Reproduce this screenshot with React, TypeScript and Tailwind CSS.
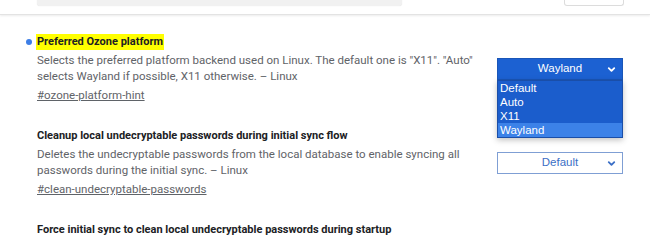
import { ChevronDown } from "lucide-react";

type Flag = {
  title: string;
  desc: string;
  link?: string;
  highlight?: boolean;
  value?: string;
  open?: boolean;
};

const FLAGS: Flag[] = [
  {
    title: "Preferred Ozone platform",
    desc: "Selects the preferred platform backend used on Linux. The default one is \"X11\". \"Auto\" selects Wayland if possible, X11 otherwise. – Linux",
    link: "#ozone-platform-hint",
    highlight: true,
    value: "Wayland",
    open: true,
  },
  {
    title: "Cleanup local undecryptable passwords during initial sync flow",
    desc: "Deletes the undecryptable passwords from the local database to enable syncing all passwords during the initial sync. – Linux",
    link: "#clean-undecryptable-passwords",
    value: "Default",
  },
  {
    title: "Force initial sync to clean local undecryptable passwords during startup",
    desc: "",
  },
];

const OPTIONS = ["Default", "Auto", "X11", "Wayland"];

const Select = ({ value, open }: { value: string; open?: boolean }) => (
  <div className="relative w-[126px] shrink-0 font-['Liberation_Sans',Arial,sans-serif]">
    {open ? (
      <div className="h-[22px] bg-[#1c61d2] border border-[#1a56b8] text-white text-[11.5px] flex items-center justify-center relative">
        {value}
        <ChevronDown className="absolute right-[5px] top-[5px] w-[11px] h-[11px]" strokeWidth={4} />
      </div>
    ) : (
      <div className="h-[22px] bg-white border border-[#7f9fd4] text-[#3b6fc6] text-[11.5px] flex items-center justify-center relative">
        {value}
        <ChevronDown className="absolute right-[5px] top-[5px] w-[11px] h-[11px]" strokeWidth={4} />
      </div>
    )}
    {open && (
      <ul className="absolute left-0 top-[22px] w-full bg-[#1b5dcc] border border-[#1a4ea8] shadow-[0_2px_6px_rgba(0,0,0,0.25)] z-10">
        {OPTIONS.map((o) => (
          <li
            key={o}
            className={`h-[14px] leading-[14px] pl-[2px] text-[11.5px] text-white ${o === value ? "bg-[#3c82e8]" : ""}`}
          >
            {o}
          </li>
        ))}
      </ul>
    )}
  </div>
);

export default function App() {
  return (
    <div className="w-[650px] h-[237px] overflow-hidden bg-white font-['Roboto','Liberation_Sans',sans-serif]">
      <header className="h-[15px] flex items-start pl-[37px] pr-[26px] border-b border-[#e3e3e3] shadow-[0_1px_2px_rgba(0,0,0,0.08)]">
        <div className="w-[365px] h-[6px] bg-[#f1f1f1] rounded-b-[3px] shadow-[0_0_1px_rgba(0,0,0,0.15)]" />
        <div className="ml-auto w-[60px] h-[6px] bg-white border border-t-0 border-[#dcdcdc] rounded-b-[3px]" />
      </header>

      <div className="flex flex-col pt-[19px]">
        {FLAGS.map((f) => (
          <div key={f.title} className="flex items-center pl-[37px] pr-[27px] h-[94px] shrink-0">
            <div className="w-[440px] self-start">
              <div className="flex items-center h-[16px] -ml-[11px]">
                <span className={`w-[6px] h-[6px] rounded-full mr-[5px] ${f.highlight ? "bg-[#3d7ee6]" : "bg-transparent"}`} />
                <h2 className={`text-[11px] font-bold text-[#202124] leading-[16px] ${f.highlight ? "bg-[#ffff00] px-[1px] -ml-[1px]" : ""}`}>
                  {f.title}
                </h2>
              </div>
              {f.desc && (
                <p className="text-[11.5px] leading-[16px] text-[#5f6368] mt-[2px]">{f.desc}</p>
              )}
              {f.link && (
                <a className="block mt-[3px] text-[11.5px] leading-[16px] text-[#5f6368] underline">{f.link}</a>
              )}
            </div>
            {f.value && (
              <div className="ml-auto -mt-[25px]">
                <Select value={f.value} open={f.open} />
              </div>
            )}
          </div>
        ))}
      </div>
    </div>
  );
}
